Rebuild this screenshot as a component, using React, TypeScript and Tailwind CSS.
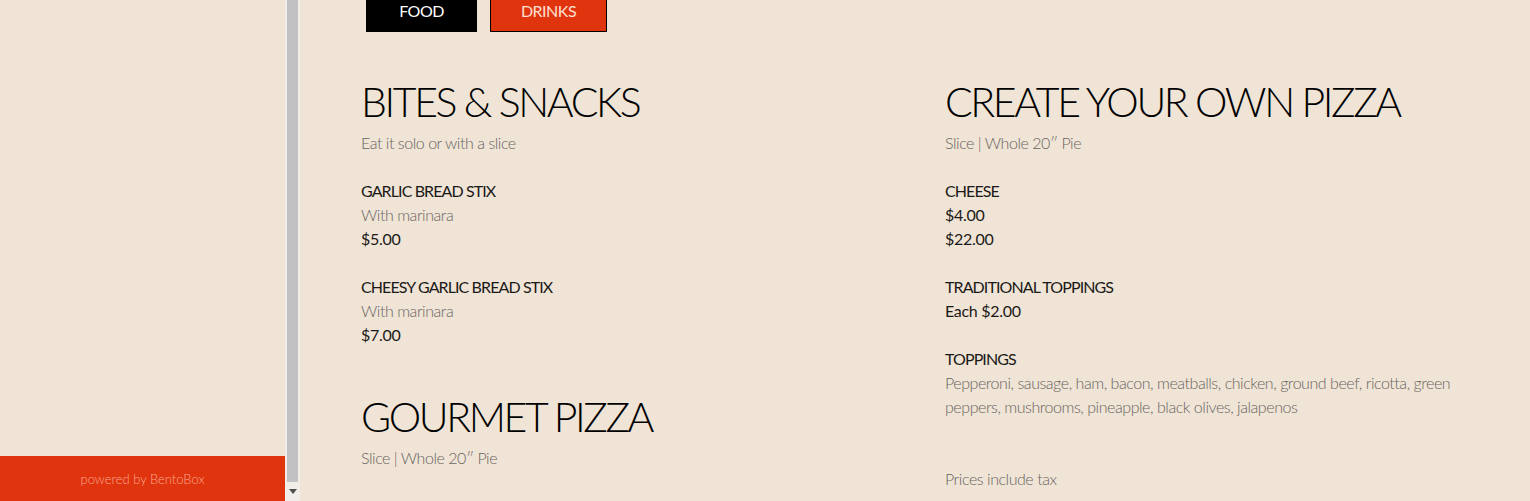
import React from "react";

const font = { fontFamily: "Lato, 'Noto Sans', sans-serif" };

function Item({ name, desc, prices }: { name: string; desc?: string; prices: string[] }) {
  return (
    <div className="mb-[24px] text-[16px] leading-[24px]">
      <div className="tracking-[-0.9px] text-[#1c1a18]">{name}</div>
      {desc && <div className="font-light tracking-[-0.45px] text-[#6a655f]">{desc}</div>}
      {prices.map((p) => (
        <div key={p} className="tracking-[-0.3px] text-[#1c1a18]">{p}</div>
      ))}
    </div>
  );
}

function Heading({ title, sub }: { title: string; sub: string }) {
  return (
    <div className="mb-[24px]">
      <h2 className="mb-[5px] whitespace-nowrap text-[41px] font-light leading-[48px] tracking-[-2.4px] text-black">
        {title}
      </h2>
      <div className="text-[16px] font-light leading-[24px] tracking-[-0.45px] text-[#6a655f]">{sub}</div>
    </div>
  );
}

export default function App() {
  return (
    <div className="flex h-[501px] w-[1530px] overflow-hidden bg-[#efe4d6]" style={font}>
      <aside className="flex h-full w-[285px] shrink-0 flex-col justify-end">
        <div className="flex h-[45px] items-center justify-center bg-[#e0340f] pt-[3px] text-[13px] font-light text-[#f8a58b]">
          powered by BentoBox
        </div>
      </aside>
      <div className="flex h-full w-[15px] shrink-0 flex-col bg-[#f1ede8] px-[2px]">
        <div className="h-[482px] w-[11px] bg-[#c1c1c4]" />
        <div className="flex flex-1 items-center justify-center">
          <svg width="8" height="5" viewBox="0 0 8 5">
            <path d="M0 0 L8 0 L4 5 Z" fill="#505050" />
          </svg>
        </div>
      </div>
      <main className="flex-1 pl-[61px] pr-[61px]">
        <div className="-mt-[12px] flex gap-[13px] pl-[5px]">
          <button className="flex h-[44px] w-[111px] items-center justify-center bg-black pt-[2px] text-[16px] tracking-[-0.5px] text-white">
            FOOD
          </button>
          <button className="flex h-[44px] w-[117px] items-center justify-center border-[1.5px] border-black bg-[#e0340f] pt-[2px] text-[16px] tracking-[-0.5px] text-[#ffe0d2]">
            DRINKS
          </button>
        </div>
        <div className="mt-[46px] grid grid-cols-[524px_540px] gap-x-[60px]">
          <div>
            <Heading title="BITES & SNACKS" sub="Eat it solo or with a slice" />
            <Item name="GARLIC BREAD STIX" desc="With marinara" prices={["$5.00"]} />
            <Item name="CHEESY GARLIC BREAD STIX" desc="With marinara" prices={["$7.00"]} />
            <div className="h-[22px]" />
            <Heading title="GOURMET PIZZA" sub="Slice | Whole 20″ Pie" />
            <Item name="VEGGIE PIZZA" desc="Peppers, onions, mushrooms" prices={["$5.00"]} />
          </div>
          <div>
            <Heading title="CREATE YOUR OWN PIZZA" sub="Slice | Whole 20″ Pie" />
            <Item name="CHEESE" prices={["$4.00", "$22.00"]} />
            <Item name="TRADITIONAL TOPPINGS" prices={["Each $2.00"]} />
            <Item
              name="TOPPINGS"
              desc="Pepperoni, sausage, ham, bacon, meatballs, chicken, ground beef, ricotta, green peppers, mushrooms, pineapple, black olives, jalapenos"
              prices={[]}
            />
            <div className="mt-[48px] text-[16px] font-light leading-[24px] tracking-[-0.45px] text-[#6a655f]">
              Prices include tax
            </div>
          </div>
        </div>
      </main>
    </div>
  );
}
